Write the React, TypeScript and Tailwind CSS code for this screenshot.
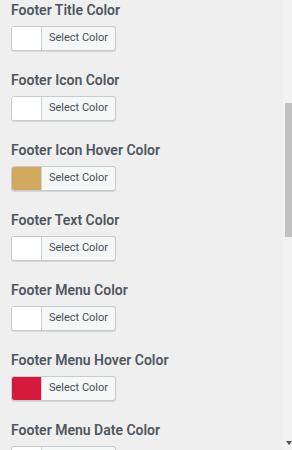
import React from "react";

const fields = [
  { label: "Footer Title Color", color: "bg-white" },
  { label: "Footer Icon Color", color: "bg-white" },
  { label: "Footer Icon Hover Color", color: "bg-[#d1aa60]" },
  { label: "Footer Text Color", color: "bg-white" },
  { label: "Footer Menu Color", color: "bg-white" },
  { label: "Footer Menu Hover Color", color: "bg-[#d5193c]" },
  { label: "Footer Menu Date Color", color: "bg-white" },
];

const ColorPicker = ({ color }: { color: string }) => (
  <button className="flex h-[25px] w-[105px] items-stretch overflow-hidden rounded-[3px] border border-[#c9cacc] bg-[#f6f7f7] p-0 shadow-[0_1px_0_#d5d6d8]">
    <span className={`w-[30px] border-r border-[#d0d1d3] ${color}`} />
    <span className="flex flex-1 items-center justify-center text-[11px] text-[#4a4f55]">
      Select Color
    </span>
  </button>
);

export default function App() {
  return (
    <div
      className="flex h-[450px] w-[292px] overflow-hidden bg-[#efefef]"
      style={{ fontFamily: "Roboto, 'Liberation Sans', sans-serif" }}
    >
      <div className="flex-1 pl-[11px]">
        {fields.map((f) => (
          <div key={f.label} className="h-[70px]">
            <h3 className="mb-[6px] text-[14px] font-semibold leading-[20px] text-[#50575e]">
              {f.label}
            </h3>
            <ColorPicker color={f.color} />
          </div>
        ))}
      </div>
      {/* scrollbar */}
      <div className="relative w-[9px] bg-[#f2f2f2]">
        <div className="absolute right-0 top-[103px] h-[134px] w-[7px] bg-[#c1c1c1]" />
        <svg className="absolute right-0 top-[441px]" width="6" height="4" viewBox="0 0 6 4">
          <path d="M0 0H6L3 4Z" fill="#505050" />
        </svg>
      </div>
    </div>
  );
}
